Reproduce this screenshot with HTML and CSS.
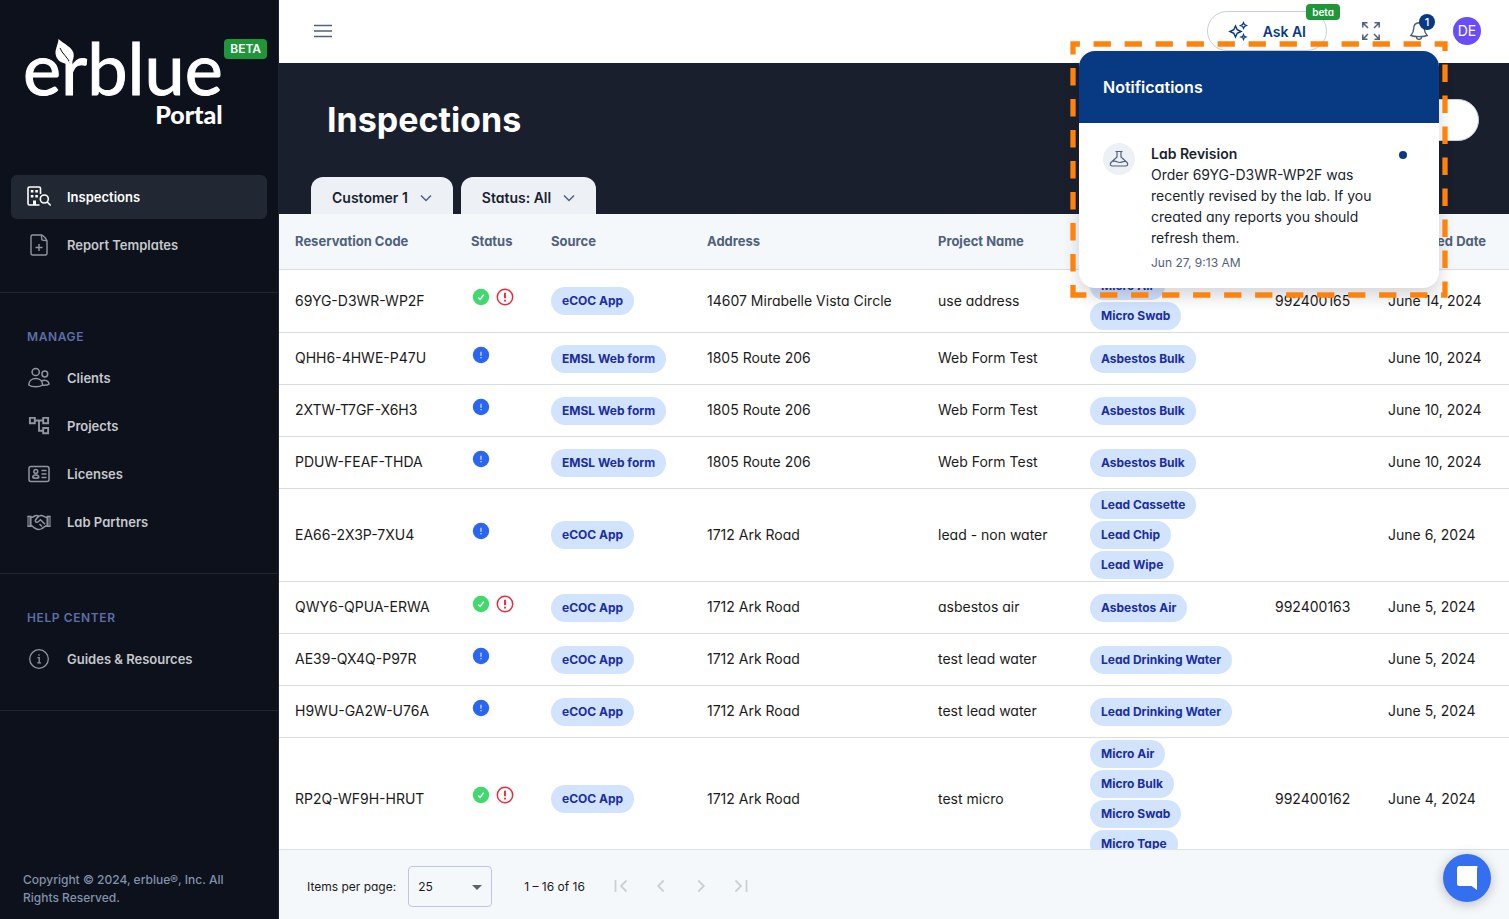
FILE: index.html
```html
<!DOCTYPE html>
<html lang="en">
<head>
<meta charset="utf-8">
<meta name="viewport" content="width=device-width, initial-scale=1">
<title>Inspections</title>
<link rel="stylesheet" href="styles.css">
</head>
<body>
<svg class="sprite" aria-hidden="true">
  <symbol id="ok" viewBox="0 0 20 20"><circle cx="10" cy="10" r="8.2" fill="#3fd96d"/><path d="M7.3 10.6l1.8 1.8 3.6-4.6" fill="none" stroke="#fff" stroke-width="1.4"/></symbol>
  <symbol id="alert" viewBox="0 0 20 20"><circle cx="10" cy="10" r="7.7" fill="none" stroke="#ea2a3b" stroke-width="1.5"/><path d="M10 5.8v5.4M10 12.7v1.7" stroke="#ea2a3b" stroke-width="1.9"/></symbol>
  <symbol id="info" viewBox="0 0 20 20"><circle cx="10" cy="10" r="8.2" fill="#2b66f2"/><path d="M10 6.8v4M10 12v1.3" stroke="#cfdefc" stroke-width="1.3"/></symbol>
  <symbol id="chev" viewBox="0 0 12 12"><path d="M1 3.5l5 5 5-5" fill="none" stroke="currentColor" stroke-width="1.5"/></symbol>
</svg>
<div class="app">
  <aside class="sidebar">
    <div class="brand">
      <div class="logo">
        <span class="logo-name">erblue</span>
        <svg class="leaf" viewBox="0 0 20 30" aria-hidden="true"><path d="M3.500 0C9 5 17 8 18.500 14c.8 4-.5 8-2.500 10.500C8.500 26 1.500 22 .6 15 0 10 3 6 3.500 0z" fill="#fff"/><path d="M5 9c2 6 8 9 10.500 16" fill="none" stroke="#0c111c" stroke-width="1"/><path d="M14.500 22l1.800 6" stroke="#fff" stroke-width="1.500"/></svg>
        <span class="logo-sub">Portal</span>
      </div>
      <span class="tag tag-large">BETA</span>
    </div>
    <nav>
      <div class="group">
        <a class="item active" href="#"><svg viewBox="0 0 24 24"><g fill="none" stroke="currentColor" stroke-width="1.600"><path d="M12.500 20H2.500A1.500 1.500 0 0 1 1 18.500v-15A1.500 1.500 0 0 1 2.500 2h9.500a1.500 1.500 0 0 1 1.500 1.500V9"/><circle cx="17.300" cy="14" r="4"/><path d="M20.200 17l3.500 3.500"/></g><path d="M3.800 5h2.600v2.600H3.800zM8.300 5h2.600v2.600H8.300zM3.800 10h2.600v2.600H3.800zM8.300 10h2.600v2.600H8.300zM6 15.500h3V20H6z" fill="currentColor"/></svg>Inspections</a>
        <a class="item" href="#"><svg viewBox="0 0 24 24" fill="none" stroke="currentColor" stroke-width="1.400"><path d="M14.500 2H5.500A1.500 1.500 0 0 0 4 3.500v17A1.500 1.500 0 0 0 5.500 22h13a1.500 1.500 0 0 0 1.500-1.500V8c0-1.500-4-6-5.500-6z"/><path d="M14 2c1 1 .5 4.500 1 5s4 .2 5 1M12 11v7M8.500 14.500h7"/></svg>Report Templates</a>
      </div>
      <div class="group">
        <h2 class="group-title">Manage</h2>
        <a class="item" href="#"><svg viewBox="0 0 24 24" fill="none" stroke="currentColor" stroke-width="1.500"><circle cx="8.700" cy="6" r="3.600"/><circle cx="17.800" cy="8" r="2.900"/><path d="M1.800 19c0-4 3-6.500 6.900-6.500s6.900 2.500 6.900 6.500c-3 2.300-10.800 2.300-13.800 0zM14.500 15c3-1.800 7.500-.2 7.500 3.200-1.500 1-4 1.200-6.500 1"/></svg>Clients</a>
        <a class="item" href="#"><svg viewBox="0 0 24 24" fill="none" stroke="currentColor" stroke-width="1.900"><path d="M2.900 3.900h4.900v5.300H2.900zM16.200 3.900h4.900v5.300h-4.900zM16.200 14h4.900v5.300h-4.900zM7.800 6.500h8.400M12 6.500v10.200h4.200"/></svg>Projects</a>
        <a class="item" href="#"><svg viewBox="0 0 24 24" fill="none" stroke="currentColor" stroke-width="1.500"><rect x="2" y="4.500" width="20" height="15" rx="2"/><circle cx="8.800" cy="9.500" r="1.900"/><path d="M5.800 15.500c0-3.300 6-3.300 6 0-1.500.8-4.500.8-6 0zM14.500 8.500h5M14.500 12h5M14.500 15.500h5"/></svg>Licenses</a>
        <a class="item" href="#"><svg viewBox="0 0 24 24" fill="none" stroke="currentColor" stroke-width="1.500"><path d="M0 5.800h3.800v11H0zM20.200 5.800H24v11h-3.800z" fill="currentColor" fill-opacity=".55" stroke="none"/><path d="M.6 6.500h3.200v9.800H.6M23.400 6.500h-3.200v9.800h3.200M4 7.500c2 0 3.500-2 5.500-2 1.500 0 1.800.5 2.500 1M4 15.500c1 0 2.500 2 4.500 3 2 1.200 5 1 6.500 0 1.500-.7 3.500-3 5-3M20 7.500c-2 0-3.500-2.200-6-2-2 .2-4.500 3-5.500 4.500-1 2 1.500 3 3 1.500l2-1.700 4.500 4.500M12.500 14l2.500 2.600"/></svg>Lab Partners</a>
      </div>
      <div class="group">
        <h2 class="group-title">Help Center</h2>
        <a class="item" href="#"><svg viewBox="0 0 24 24" fill="none" stroke="currentColor" stroke-width="1.300"><circle cx="12" cy="12" r="9.300"/><path d="M10.500 10.700h1.700v5M10.300 15.800h3.700M12 7.300v1.500"/></svg>Guides &amp; Resources</a>
      </div>
    </nav>
    <p class="copyright">Copyright © 2024, erblue®, Inc. All Rights Reserved.</p>
  </aside>

  <div class="page">
    <header class="topbar">
      <button class="icon-btn" aria-label="Toggle menu"><svg class="i20" viewBox="0 0 20 20" fill="none" stroke="currentColor" stroke-width="1.400"><path d="M1 4.500h18M1 10h18M1 15.500h18"/></svg></button>
      <div class="actions">
        <button class="ask"><svg class="i20" viewBox="0 0 20 20" fill="none" stroke="currentColor" stroke-width="1.500"><path d="M7.500 5l1.700 3.800L13 10.500l-3.800 1.700L7.500 16l-1.700-3.800L2 10.500l3.800-1.700z"/><path d="M15.500 1.500l.9 2.100 2.100.9-2.100.9-.9 2.100-.9-2.100-2.100-.9 2.100-.9zM15.500 13.500l.7 1.800 1.800.7-1.800.7-.7 1.800-.7-1.800-1.800-.7 1.800-.7z" stroke-width="1.200"/></svg>Ask AI<span class="tag tag-small">beta</span></button>
        <button class="icon-btn" aria-label="Full screen"><svg class="i20" viewBox="0 0 20 20" fill="none" stroke="currentColor" stroke-width="1.500"><path d="M1.800 6.500V1.800h4.700M13.500 1.800h4.700v4.700M18.200 13.500v4.700h-4.700M6.500 18.200H1.800v-4.700M2 2l5 5M18 2l-5 5M18 18l-5-5M2 18l5-5"/></svg></button>
        <button class="icon-btn" aria-label="Notifications"><svg class="i20" viewBox="0 0 20 20" fill="none" stroke="currentColor" stroke-width="1.400"><path d="M10 1.800C6.500 2 4.700 4.500 4.700 7.500c0 4-1 5-2.900 7 3.500 1.500 12.900 1.500 16.400 0-1.900-2-2.900-3-2.900-7 0-3-1.800-5.500-5.300-5.700zM7.500 15.800c0 3.500 5 3.500 5 0"/></svg><span class="count">1</span></button>
        <button class="icon-btn" aria-label="Account"><span class="avatar">DE</span></button>
      </div>
    </header>

    <section class="hero">
      <div class="hero-row">
        <h1>Inspections</h1>
        <input class="search" type="search" aria-label="Search inspections">
      </div>
      <div class="tabs">
        <button class="tab">Customer 1<svg class="i12"><use href="#chev"/></svg></button>
        <button class="tab">Status: All<svg class="i12"><use href="#chev"/></svg></button>
      </div>
    </section>

    <div class="table-wrap">
      <table>
        <colgroup><col class="c-code"><col class="c-status"><col class="c-source"><col class="c-address"><col class="c-project"><col class="c-type"><col class="c-order"><col class="c-date"></colgroup>
        <thead><tr><th>Reservation Code</th><th>Status</th><th>Source</th><th>Address</th><th>Project Name</th><th aria-label="Type"></th><th aria-label="Order"></th><th>Submitted Date</th></tr></thead>
        <tbody>
          <tr><td>69YG-D3WR-WP2F</td><td class="status"><div><svg><use href="#ok"/></svg><svg><use href="#alert"/></svg></div></td><td class="source"><span class="chip">eCOC App</span></td><td>14607 Mirabelle Vista Circle</td><td>use address</td><td><div class="chips"><span class="chip">Micro Air</span><span class="chip">Micro Swab</span></div></td><td>992400165</td><td>June 14, 2024</td></tr>
          <tr><td>QHH6-4HWE-P47U</td><td class="status"><div><svg><use href="#info"/></svg></div></td><td class="source"><span class="chip">EMSL Web form</span></td><td>1805 Route 206</td><td>Web Form Test</td><td><div class="chips"><span class="chip">Asbestos Bulk</span></div></td><td></td><td>June 10, 2024</td></tr>
          <tr><td>2XTW-T7GF-X6H3</td><td class="status"><div><svg><use href="#info"/></svg></div></td><td class="source"><span class="chip">EMSL Web form</span></td><td>1805 Route 206</td><td>Web Form Test</td><td><div class="chips"><span class="chip">Asbestos Bulk</span></div></td><td></td><td>June 10, 2024</td></tr>
          <tr><td>PDUW-FEAF-THDA</td><td class="status"><div><svg><use href="#info"/></svg></div></td><td class="source"><span class="chip">EMSL Web form</span></td><td>1805 Route 206</td><td>Web Form Test</td><td><div class="chips"><span class="chip">Asbestos Bulk</span></div></td><td></td><td>June 10, 2024</td></tr>
          <tr><td>EA66-2X3P-7XU4</td><td class="status"><div><svg><use href="#info"/></svg></div></td><td class="source"><span class="chip">eCOC App</span></td><td>1712 Ark Road</td><td>lead - non water</td><td><div class="chips"><span class="chip">Lead Cassette</span><span class="chip">Lead Chip</span><span class="chip">Lead Wipe</span></div></td><td></td><td>June 6, 2024</td></tr>
          <tr><td>QWY6-QPUA-ERWA</td><td class="status"><div><svg><use href="#ok"/></svg><svg><use href="#alert"/></svg></div></td><td class="source"><span class="chip">eCOC App</span></td><td>1712 Ark Road</td><td>asbestos air</td><td><div class="chips"><span class="chip">Asbestos Air</span></div></td><td>992400163</td><td>June 5, 2024</td></tr>
          <tr><td>AE39-QX4Q-P97R</td><td class="status"><div><svg><use href="#info"/></svg></div></td><td class="source"><span class="chip">eCOC App</span></td><td>1712 Ark Road</td><td>test lead water</td><td><div class="chips"><span class="chip">Lead Drinking Water</span></div></td><td></td><td>June 5, 2024</td></tr>
          <tr><td>H9WU-GA2W-U76A</td><td class="status"><div><svg><use href="#info"/></svg></div></td><td class="source"><span class="chip">eCOC App</span></td><td>1712 Ark Road</td><td>test lead water</td><td><div class="chips"><span class="chip">Lead Drinking Water</span></div></td><td></td><td>June 5, 2024</td></tr>
          <tr><td>RP2Q-WF9H-HRUT</td><td class="status"><div><svg><use href="#ok"/></svg><svg><use href="#alert"/></svg></div></td><td class="source"><span class="chip">eCOC App</span></td><td>1712 Ark Road</td><td>test micro</td><td><div class="chips"><span class="chip">Micro Air</span><span class="chip">Micro Bulk</span><span class="chip">Micro Swab</span><span class="chip">Micro Tape</span></div></td><td>992400162</td><td>June 4, 2024</td></tr>
        </tbody>
      </table>
    </div>

    <footer class="pager">
      <label for="size">Items per page:</label>
      <div class="select"><select id="size"><option>25</option></select><svg viewBox="0 0 10 5" aria-hidden="true"><path d="M0 0h10L5 5z" fill="currentColor"/></svg></div>
      <span class="range">1 – 16 of 16</span>
      <div class="pages">
        <button class="icon-btn" aria-label="First page" disabled><svg class="i20" viewBox="0 0 20 20" fill="none" stroke="currentColor" stroke-width="1.800"><path d="M4.500 4v12M15.500 4.500L10 10l5.500 5.500"/></svg></button>
        <button class="icon-btn" aria-label="Previous page" disabled><svg class="i20" viewBox="0 0 20 20" fill="none" stroke="currentColor" stroke-width="1.800"><path d="M12.700 4.500L7.200 10l5.500 5.500"/></svg></button>
        <button class="icon-btn" aria-label="Next page" disabled><svg class="i20" viewBox="0 0 20 20" fill="none" stroke="currentColor" stroke-width="1.800"><path d="M7.300 4.500l5.500 5.500-5.500 5.500"/></svg></button>
        <button class="icon-btn" aria-label="Last page" disabled><svg class="i20" viewBox="0 0 20 20" fill="none" stroke="currentColor" stroke-width="1.800"><path d="M4.500 4.500L10 10l-5.500 5.500M15.500 4v12"/></svg></button>
      </div>
    </footer>
  </div>

  <section class="popover" aria-label="Notifications">
    <h2 class="popover-head">Notifications</h2>
    <div class="note">
      <span class="note-icon"><svg class="i20" viewBox="0 0 20 20" fill="none" stroke="currentColor" stroke-width="1.200"><path d="M6.500 2.500h7M8 2.500V8l-6 5.500c-1.500 1.800-.5 3.500 1.500 3.500h13c2 0 3-1.700 1.500-3.500L12 8V2.500M4 12.500c3-1.500 4 1 6.500 1s3.500-1.500 6-1"/></svg></span>
      <div class="note-body">
        <h3>Lab Revision</h3>
        <p>Order 69YG-D3WR-WP2F was recently revised by the lab. If you created any reports you should refresh them.</p>
        <time>Jun 27, 9:13 AM</time>
      </div>
      <span class="unread"></span>
    </div>
    <svg class="frame" viewBox="0 0 378 257" preserveAspectRatio="none" aria-hidden="true"><path d="M3 254V3h372v251z" fill="none" stroke="#ff820a" stroke-width="5.300" stroke-dasharray="17.300 13.700" stroke-dashoffset="7.400"/></svg>
  </section>

  <button class="chat" aria-label="Open chat"><svg viewBox="0 0 24 24"><path d="M4.500 0h13A2.500 2.500 0 0 1 22 2.500V24l-5.500-4h-12A2.500 2.500 0 0 1 2 17.500v-15A2.500 2.500 0 0 1 4.500 0z" fill="#fff"/></svg></button>
</div>
</body>
</html>
```
FILE: styles.css
```css
* { box-sizing: border-box; }
body {
  margin: 0;
  font-family: Inter, "Liberation Sans", sans-serif;
  font-feature-settings: "cv11";
  font-size: 14px;
  line-height: 21px;
  color: #1b1b1b;
}
h1, h2, h3, p { margin: 0; }
button {
  font: inherit;
  font-feature-settings: inherit;
  border: 0;
  padding: 0;
  background: none;
  color: inherit;
}
.sprite { position: absolute; width: 0; height: 0; }
.i20 { width: 20px; height: 20px; }
.i12 { width: 12px; height: 12px; }

.app { position: relative; display: flex; height: 100vh; overflow: hidden; }

/* Sidebar */
.sidebar {
  flex: 0 0 279px;
  display: flex;
  flex-direction: column;
  background: #0c111c;
  border-right: 1px solid #1c2331;
}
.brand {
  display: flex;
  justify-content: space-between;
  align-items: flex-start;
  padding: 39px 11px 0 23px;
  height: 175px;
}
.logo {
  position: relative;
  display: flex;
  flex-direction: column;
  align-items: flex-end;
  color: #fff;
}
.logo-name {
  font-family: Lato, sans-serif;
  font-size: 72px;
  line-height: 56px;
  -webkit-text-stroke: 1px #fff;
}
.logo-sub {
  font-family: Lato, sans-serif;
  font-weight: 900;
  font-size: 25px;
  line-height: 38px;
}
.leaf { position: absolute; left: 32px; top: 0; width: 20px; height: 30px; }
.tag { background: #1f9639; color: #fff; font-weight: 600; border-radius: 4px; }
.tag-large { font-size: 12px; line-height: 20px; padding: 0 6px; }
nav { flex: 1; }
.group {
  display: flex;
  flex-direction: column;
  gap: 4px;
  padding: 36px 11px 29px;
  border-bottom: 1px solid #202634;
}
.group:first-child { padding: 0 11px 25px; }
.group-title {
  padding: 0 16px;
  margin-bottom: 7px;
  font-size: 12px;
  line-height: 16px;
  font-weight: 600;
  letter-spacing: 0.6px;
  text-transform: uppercase;
  color: #5c6fa6;
}
.item {
  display: flex;
  align-items: center;
  gap: 16px;
  height: 44px;
  padding: 0 16px;
  border-radius: 6px;
  font-size: 13px;
  font-weight: 600;
  color: #c6c8cc;
  text-decoration: none;
}
.item svg { width: 24px; height: 24px; color: #91959d; }
.item.active { background: #222734; color: #fff; }
.item.active svg { color: #fff; }
.copyright {
  padding: 0 24px 12px 23px;
  font-size: 12px;
  line-height: 18px;
  font-weight: 500;
  color: #8391a9;
}

/* Top bar */
.page { flex: 1; min-width: 0; display: flex; flex-direction: column; }
.topbar {
  display: flex;
  justify-content: space-between;
  align-items: center;
  height: 63px;
  padding: 0 22px 1px 24px;
  background: #fff;
}
.actions { display: flex; align-items: center; gap: 8px; }
.icon-btn {
  position: relative;
  display: flex;
  align-items: center;
  justify-content: center;
  width: 40px;
  height: 40px;
  color: #50617b;
}
.ask {
  position: relative;
  display: flex;
  align-items: center;
  gap: 15px;
  height: 40px;
  margin-right: 16px;
  padding: 0 20px;
  border: 1px solid #c6d0df;
  border-radius: 20px;
  font-weight: 600;
  color: #083a83;
}
.tag-small {
  position: absolute;
  top: -8px;
  right: -14px;
  padding: 0 6px;
  font-size: 10px;
  line-height: 16px;
}
.count {
  position: absolute;
  top: 3px;
  right: 4px;
  width: 16px;
  border-radius: 8px;
  background: #083a83;
  color: #fff;
  font-size: 11px;
  line-height: 16px;
  font-weight: 500;
  text-align: center;
}
.avatar {
  width: 28px;
  border-radius: 14px;
  background: #6a4cfb;
  color: #fff;
  font-size: 14px;
  line-height: 28px;
  text-align: center;
}

/* Page heading */
.hero { background: #1a1f2e; padding: 36px 30px 0 32px; }
.hero-row {
  display: flex;
  align-items: center;
  justify-content: space-between;
  padding-left: 16px;
}
h1 { font-size: 34px; line-height: 42px; font-weight: 700; color: #fff; }
.search {
  width: 280px;
  height: 42px;
  border: 1px solid #c6d0df;
  border-radius: 21px;
  background: #fff;
}
.tabs { display: flex; gap: 8px; padding-top: 36px; }
.tab {
  display: flex;
  align-items: center;
  gap: 12px;
  height: 37px;
  padding: 4px 21px 0;
  border-radius: 12px 12px 0 0;
  background: #edf1f6;
  font-weight: 600;
  color: #1a1f2e;
}
.tab svg { color: #50617b; }

/* Table */
.table-wrap { flex: 1; min-height: 0; overflow: hidden; background: #fff; }
table { width: 100%; table-layout: fixed; border-collapse: separate; border-spacing: 0; }
.c-code { width: 176px; }
.c-status { width: 80px; }
.c-source { width: 156px; }
.c-address { width: 231px; }
.c-project { width: 152px; }
.c-type { width: 185px; }
.c-order { width: 113px; }
.c-date { width: 137px; }
th {
  height: 56px;
  padding: 0 0 0 16px;
  background: #f5f8fb;
  border-bottom: 1px solid #d9dce0;
  font-size: 13px;
  font-weight: 700;
  text-align: left;
  white-space: nowrap;
  color: #50617b;
}
td {
  height: 52px;
  padding: 0 0 2px 16px;
  border-bottom: 1px solid #d9dce0;
  white-space: nowrap;
}
.source { padding-bottom: 0; }
.status { padding-bottom: 8px; }
.status div { display: flex; gap: 4px; }
.status svg { width: 20px; height: 20px; }
.chips { display: flex; flex-direction: column; align-items: flex-start; gap: 2px; padding-top: 2px; }
.chip {
  display: inline-block;
  padding: 0 11px;
  border-radius: 14px;
  background: #d2e3fe;
  color: #1b2da3;
  font-size: 12px;
  line-height: 28px;
  font-weight: 700;
}

/* Pager */
.pager {
  display: flex;
  align-items: center;
  height: 70px;
  padding: 3px 28px 0;
  border-top: 1px solid #dae1e9;
  background: #f5f8fb;
  font-size: 12px;
}
.select { position: relative; width: 84px; margin: 0 32px 0 12px; }
.select select {
  width: 100%;
  height: 41px;
  padding: 0 9px;
  border: 1px solid #bcc8de;
  border-radius: 4px;
  background: none;
  appearance: none;
  font: inherit;
  color: inherit;
}
.select svg { position: absolute; right: 10px; top: 19px; width: 10px; height: 5px; color: #5f6368; }
.pages { display: flex; margin-left: 16px; }
.pages .icon-btn { color: #cdcfd2; }

/* Notification popover */
.popover {
  position: absolute;
  top: 51px;
  right: 70px;
  width: 360px;
  border-radius: 16px;
  background: #fff;
  box-shadow: 0 8px 16px rgba(20, 30, 50, 0.18);
}
.popover-head {
  padding: 0 24px;
  border-radius: 16px 16px 0 0;
  background: #083a83;
  color: #fff;
  font-size: 16px;
  line-height: 72px;
  font-weight: 600;
}
.note { display: flex; align-items: flex-start; padding: 20px 32px 16px 24px; }
.note-icon {
  display: flex;
  align-items: center;
  justify-content: center;
  width: 32px;
  height: 32px;
  border-radius: 16px;
  background: #edf1f6;
  color: #50617b;
}
.note-body { flex: 1; padding: 0 20px 0 16px; color: #1a1f2e; }
.note-body h3 { font-size: 14px; font-weight: 600; }
.note-body time { display: block; margin-top: 6px; font-size: 12px; line-height: 18px; color: #50617b; }
.unread { width: 8px; height: 8px; margin-top: 8px; border-radius: 4px; background: #083a83; }
.frame { position: absolute; left: -9px; top: -10px; width: 378px; height: calc(100% + 20px); }

.chat {
  position: absolute;
  right: 18px;
  bottom: 17px;
  display: flex;
  align-items: center;
  justify-content: center;
  width: 48px;
  height: 48px;
  border-radius: 24px;
  background: #346ff0;
  box-shadow: 0 2px 12px rgba(0, 0, 0, 0.25);
}
.chat svg { width: 24px; height: 24px; }
```
